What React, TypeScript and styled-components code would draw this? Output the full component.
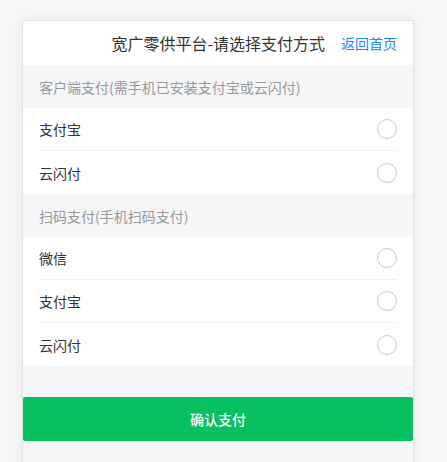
import styled, { createGlobalStyle } from 'styled-components';

const GlobalStyle = createGlobalStyle`
  html, body {
    margin: 0;
    padding: 0;
    background: #f6f7f7;
    font-family: "Noto Sans CJK SC", "Noto Sans", sans-serif;
  }
  * {
    box-sizing: border-box;
  }
`;

const Page = styled.div`
  padding: 20px 0 0 22px;
  height: 462px;
  overflow: hidden;
`;

const Card = styled.div`
  width: 392px;
  min-height: 460px;
  background: #f5f6f8;
  border: 1px solid #e2e3e5;
  box-shadow: 0 0 14px rgba(0, 0, 0, 0.06);
`;

const Header = styled.div`
  height: 44px;
  background: #fff;
  display: flex;
  align-items: center;
  justify-content: flex-end;
  padding-right: 16px;
`;

const Title = styled.span`
  font-size: 16px;
  color: #333;
  margin-right: 16px;
`;

const BackLink = styled.a`
  font-size: 14px;
  color: #1989fa;
  text-decoration: none;
  cursor: pointer;
`;

const SectionTitle = styled.div`
  height: 43px;
  display: flex;
  align-items: center;
  padding-left: 16px;
  font-size: 14px;
  color: #999;
`;

const Group = styled.div`
  background: #fff;
  padding: 0 16px 0 16px;
`;

const Row = styled.div<{ $last?: boolean }>`
  height: 43px;
  display: flex;
  align-items: center;
  justify-content: space-between;
  font-size: 14px;
  color: #333;
  border-bottom: ${(p) => (p.$last ? 'none' : '1px solid #f0f0f0')};
`;

const Radio = styled.span`
  width: 20px;
  height: 20px;
  border: 1px solid #c8c9cc;
  border-radius: 50%;
`;

const Footer = styled.div`
  padding-top: 31px;
`;

const PayButton = styled.button`
  display: block;
  width: 100%;
  height: 44px;
  border: none;
  border-radius: 2px;
  background: #07c160;
  color: #fff;
  font-size: 14px;
  font-weight: 500;
  font-family: inherit;
  cursor: pointer;
`;

const sections = [
  { title: '客户端支付(需手机已安装支付宝或云闪付)', items: ['支付宝', '云闪付'] },
  { title: '扫码支付(手机扫码支付)', items: ['微信', '支付宝', '云闪付'] },
];

export default function App() {
  return (
    <>
      <GlobalStyle />
      <Page>
        <Card>
          <Header>
            <Title>宽广零供平台-请选择支付方式</Title>
            <BackLink>返回首页</BackLink>
          </Header>
          {sections.map((s) => (
            <div key={s.title}>
              <SectionTitle>{s.title}</SectionTitle>
              <Group>
                {s.items.map((it, i) => (
                  <Row key={it} $last={i === s.items.length - 1}>
                    <span>{it}</span>
                    <Radio />
                  </Row>
                ))}
              </Group>
            </div>
          ))}
          <Footer>
            <PayButton>确认支付</PayButton>
          </Footer>
        </Card>
      </Page>
    </>
  );
}
